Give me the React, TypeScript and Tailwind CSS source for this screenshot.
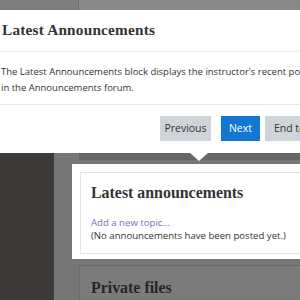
import React from "react";

const serif = { fontFamily: '"Liberation Serif", "DejaVu Serif", serif' };
const sans = { fontFamily: '"Open Sans", "Noto Sans", sans-serif' };

export default function App() {
  return (
    <div className="relative h-[300px] w-[300px] overflow-hidden bg-[#767676]" style={sans}>
      {/* page top, behind the tour step */}
      <div className="flex h-[10px]">
        <div className="w-[79px] border-r border-[#6f6f6f] bg-[#7e7e7e]" />
        <div className="flex-1 bg-[#888888]" />
      </div>

      {/* tour step */}
      <div className="relative z-10 h-[143px] w-[330px] bg-white">
        <div className="flex h-[42px] items-center border-b border-[#e6e6e6] pl-[2px]">
          <h3 className="text-[15.3px] font-bold tracking-[0.2px] text-[#333333]" style={serif}>
            Latest Announcements
          </h3>
        </div>
        <div className="h-[53px] border-b border-[#e6e6e6] pt-[12px] pl-[1px]">
          <p className="whitespace-nowrap text-[9.5px] leading-[16px] text-[#333333]">
            The Latest Announcements block displays the instructor's recent posts
            <br />
            in the Announcements forum.
          </p>
        </div>
        <div className="flex items-start pt-[11px] pl-[160px]">
          <button className="h-[25px] w-[51px] bg-[#ced4da] text-[10.5px] text-[#333333]">Previous</button>
          <button className="ml-[10px] h-[25px] w-[39px] bg-[#1177d1] text-[10.5px] text-white">Next</button>
          <button className="ml-[5px] h-[25px] w-[60px] bg-[#ced4da] text-[10.5px] text-[#333333]">End tour</button>
        </div>
        <div className="absolute bottom-[-8px] left-[190px] h-0 w-0 border-x-[9px] border-t-[8px] border-x-transparent border-t-white" />
      </div>

      {/* dimmed page content */}
      <div className="flex h-[147px]">
        <div className="w-[54px] bg-[#3d3a38]" />
        <div className="flex flex-1 flex-col">
          <div className="ml-[25px] h-[7px] bg-[#666666]" />
          <div className="ml-[18px] mt-[4px] h-[98px] bg-white pl-[8px] pt-[8px]">
            <div className="h-[82px] border-y border-l border-[#e3e3e3] pl-[10px] pt-[8px]">
              <h4 className="text-[15.9px] font-bold leading-[24px] text-[#333333]" style={serif}>
                Latest announcements
              </h4>
              <div className="mt-[11px] text-[9.6px] leading-[13px]">
                <div className="text-[#6d79b3]">Add a new topic...</div>
                <div className="text-[#333333]">(No announcements have been posted yet.)</div>
              </div>
            </div>
          </div>
          <div className="ml-[25px] mt-[6px] flex-1 border-l border-t border-[#6c6c6c] bg-[#7b7b7b] pl-[11px] pt-[10px]">
            <h4 className="text-[15.9px] font-bold leading-[24px] text-[#262626]" style={serif}>
              Private files
            </h4>
          </div>
        </div>
      </div>
    </div>
  );
}
